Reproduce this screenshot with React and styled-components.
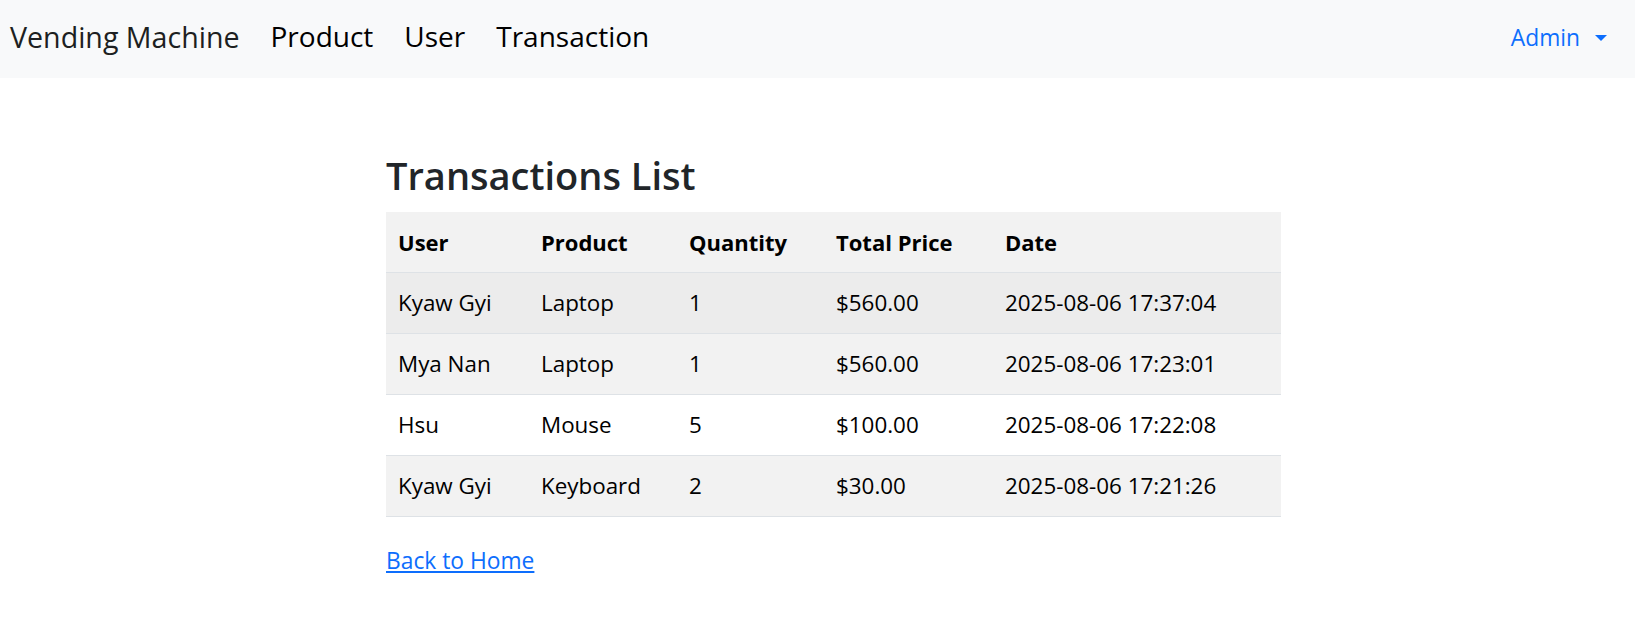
import React from "react";
import styled, { createGlobalStyle } from "styled-components";

const GlobalStyle = createGlobalStyle`
  html, body { margin: 0; padding: 0; background: #fff; }
  body {
    font-family: "Open Sans", "Noto Sans", sans-serif;
    color: #212529;
  }
  * { box-sizing: border-box; }
`;

const Navbar = styled.nav`
  height: 78px;
  background: #f8f9fa;
  display: flex;
  align-items: center;
  justify-content: space-between;
  padding: 0 28px 4px 10px;
`;

const NavLeft = styled.div`
  display: flex;
  align-items: center;
  gap: 31px;
`;

const NavItem = styled.a`
  font-size: ${(p) => (p.$brand ? "28.6px" : "28px")};
  line-height: 1.2;
  color: ${(p) => (p.$brand ? "#1d1f21" : "#000")};
  text-decoration: none;
  white-space: nowrap;
`;

const Dropdown = styled.a`
  display: flex;
  align-items: center;
  gap: 15px;
  font-size: 22.8px;
  color: #0d6efd;
  text-decoration: none;
`;

const Caret = styled.span`
  width: 0;
  height: 0;
  border-left: 6px solid transparent;
  border-right: 6px solid transparent;
  border-top: 6px solid #0d6efd;
  margin-top: 2px;
`;

const Main = styled.main`
  margin-left: 386px;
  width: 895px;
  padding-top: 73px;
`;

const Title = styled.h3`
  margin: 0 0 12px;
  font-size: 38px;
  font-weight: 600;
  line-height: 49px;
  color: #212529;
`;

const Table = styled.table`
  width: 100%;
  border-collapse: collapse;
  margin-bottom: 26px;
  font-size: 22.4px;
  table-layout: fixed;
`;

const Row = styled.tr`
  background: ${(p) => p.$bg};
`;

const HeadCell = styled.th`
  text-align: left;
  font-weight: 700;
  font-size: 22px;
  padding: 12px;
  line-height: 36px;
  border-bottom: 1px solid #dee2e6;
  color: #000;
  width: ${(p) => p.$w}px;
  white-space: nowrap;
`;

const Cell = styled.td`
  padding: 12px;
  line-height: 36px;
  border-bottom: 1px solid #dee2e6;
  color: #000;
  white-space: nowrap;
`;

const BackLink = styled.a`
  display: inline-block;
  font-size: 22.8px;
  line-height: 36px;
  color: #0d6efd;
  text-decoration: underline;
`;

const columns = [
  { label: "User", w: 143 },
  { label: "Product", w: 148 },
  { label: "Quantity", w: 147 },
  { label: "Total Price", w: 169 },
  { label: "Date", w: 288 },
];

const rows = [
  ["Kyaw Gyi", "Laptop", "1", "$560.00", "2025-08-06 17:37:04"],
  ["Mya Nan", "Laptop", "1", "$560.00", "2025-08-06 17:23:01"],
  ["Hsu", "Mouse", "5", "$100.00", "2025-08-06 17:22:08"],
  ["Kyaw Gyi", "Keyboard", "2", "$30.00", "2025-08-06 17:21:26"],
];

const rowBg = ["#ececec", "#f2f2f2", "#ffffff", "#f2f2f2"];

export default function App() {
  return (
    <>
      <GlobalStyle />
      <Navbar>
        <NavLeft>
          <NavItem $brand href="#">Vending Machine</NavItem>
          <NavItem href="#">Product</NavItem>
          <NavItem href="#">User</NavItem>
          <NavItem href="#">Transaction</NavItem>
        </NavLeft>
        <Dropdown href="#">
          Admin
          <Caret />
        </Dropdown>
      </Navbar>
      <Main>
        <Title>Transactions List</Title>
        <Table>
          <tbody>
            <Row $bg="#f2f2f2">
              {columns.map((c) => (
                <HeadCell key={c.label} $w={c.w}>
                  {c.label}
                </HeadCell>
              ))}
            </Row>
            {rows.map((r, i) => (
              <Row key={i} $bg={rowBg[i]}>
                {r.map((v, j) => (
                  <Cell key={j}>{v}</Cell>
                ))}
              </Row>
            ))}
          </tbody>
        </Table>
        <BackLink href="#">Back to Home</BackLink>
      </Main>
    </>
  );
}
